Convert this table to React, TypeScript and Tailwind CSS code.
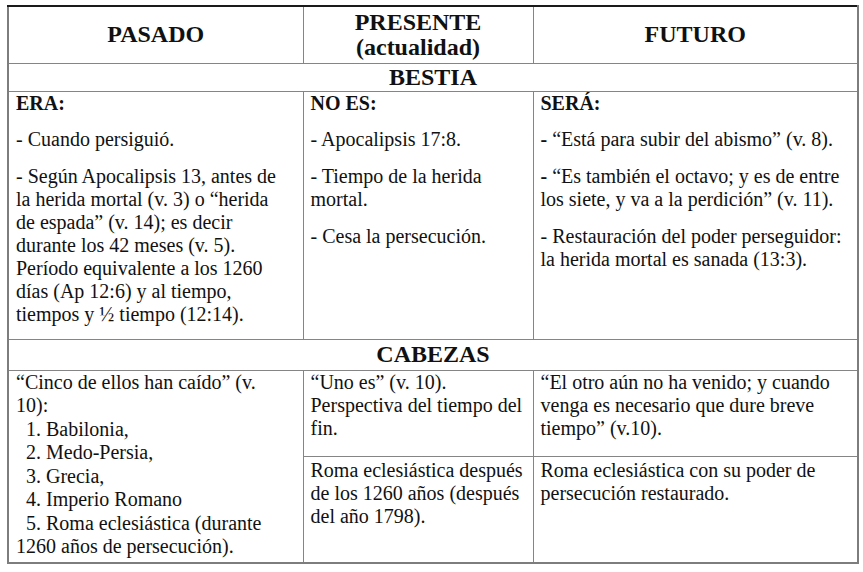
const lineCls = "whitespace-nowrap";

function Lines({ lines, className = "" }: { lines: string[]; className?: string }) {
  return (
    <div className={className}>
      {lines.map((l) => (
        <div key={l} className={lineCls}>
          {l}
        </div>
      ))}
    </div>
  );
}

export default function App() {
  const cell = "border border-[#858585] align-top px-[7px] py-0";
  const heading = "border border-[#858585] text-center align-middle text-[24px] leading-[25px] font-bold";
  return (
    <main className="min-h-screen bg-white pl-[7px] pt-[5px] font-[Liberation_Serif] text-[20px] leading-[23px] text-[#111]">
      <table className="w-[850px] table-fixed border-collapse border-2 border-[#7d7d7d] border-t-[#1a1a1a] font-[Liberation_Serif] text-[20px] leading-[23px] text-[#111]">
        <colgroup>
          <col className="w-[295px]" />
          <col className="w-[230px]" />
          <col className="w-[325px]" />
        </colgroup>
        <tbody>
          {/* Header */}
          <tr className="h-[57px]">
            <th className={heading}>PASADO</th>
            <th className={`${heading} leading-[24px]`}>
              PRESENTE
              <br />
              (actualidad)
            </th>
            <th className={heading}>FUTURO</th>
          </tr>

          {/* Bestia */}
          <tr className="h-[28px]">
            <td colSpan={3} className={`${heading} text-[23px]`}>
              BESTIA
            </td>
          </tr>

          <tr className="h-[248px]">
            <td className={cell}>
              <div className="font-bold">ERA:</div>
              <div className="mt-[13px]">- Cuando persiguió.</div>
              <Lines
                className="mt-[14px]"
                lines={[
                  "- Según Apocalipsis 13, antes de",
                  "la herida mortal (v. 3) o “herida",
                  "de espada” (v. 14); es decir",
                  "durante los 42 meses (v. 5).",
                  "Período equivalente a los 1260",
                  "días (Ap 12:6) y al tiempo,",
                  "tiempos y ½ tiempo (12:14).",
                ]}
              />
            </td>
            <td className={cell}>
              <div className="font-bold">NO ES:</div>
              <div className="mt-[13px]">- Apocalipsis 17:8.</div>
              <Lines className="mt-[14px]" lines={["- Tiempo de la herida", "mortal."]} />
              <div className="mt-[14px]">- Cesa la persecución.</div>
            </td>
            <td className={cell}>
              <div className="font-bold">SERÁ:</div>
              <div className="mt-[13px] whitespace-nowrap">
                <span className="font-bold">-</span> “Está para subir del abismo” (v. 8).
              </div>
              <div className="mt-[14px] whitespace-nowrap">
                <span className="font-bold">-</span> “Es también el octavo; y es de entre
                <br />
                los siete, y va a la perdición” (v. 11).
              </div>
              <Lines
                className="mt-[14px]"
                lines={["- Restauración del poder perseguidor:", "la herida mortal es sanada (13:3)."]}
              />
            </td>
          </tr>

          {/* Cabezas */}
          <tr className="h-[31px]">
            <td colSpan={3} className={heading}>
              CABEZAS
            </td>
          </tr>

          <tr className="h-[86px]">
            <td rowSpan={2} className={`${cell} leading-[23.5px]`}>
              <div className="whitespace-nowrap">“Cinco de ellos han caído” (v.</div>
              <div>10):</div>
              <div className="pl-[10px]">1. Babilonia,</div>
              <div className="pl-[10px]">2. Medo-Persia,</div>
              <div className="pl-[10px]">3. Grecia,</div>
              <div className="pl-[10px]">4. Imperio Romano</div>
              <div className="pl-[10px] whitespace-nowrap">5. Roma eclesiástica (durante</div>
              <div className="whitespace-nowrap">1260 años de persecución).</div>
            </td>
            <td className={cell}>
              <Lines lines={["“Uno es” (v. 10).", "Perspectiva del tiempo del", "fin."]} />
            </td>
            <td className={cell}>
              <Lines
                lines={[
                  "“El otro aún no ha venido; y cuando",
                  "venga es necesario que dure breve",
                  "tiempo” (v.10).",
                ]}
              />
            </td>
          </tr>
          <tr className="h-[107px]">
            <td className={cell}>
              <Lines
                className="pt-[2px]"
                lines={["Roma eclesiástica después", "de los 1260 años (después", "del año 1798)."]}
              />
            </td>
            <td className={cell}>
              <Lines className="pt-[2px]" lines={["Roma eclesiástica con su poder de", "persecución restaurado."]} />
            </td>
          </tr>
        </tbody>
      </table>
    </main>
  );
}
